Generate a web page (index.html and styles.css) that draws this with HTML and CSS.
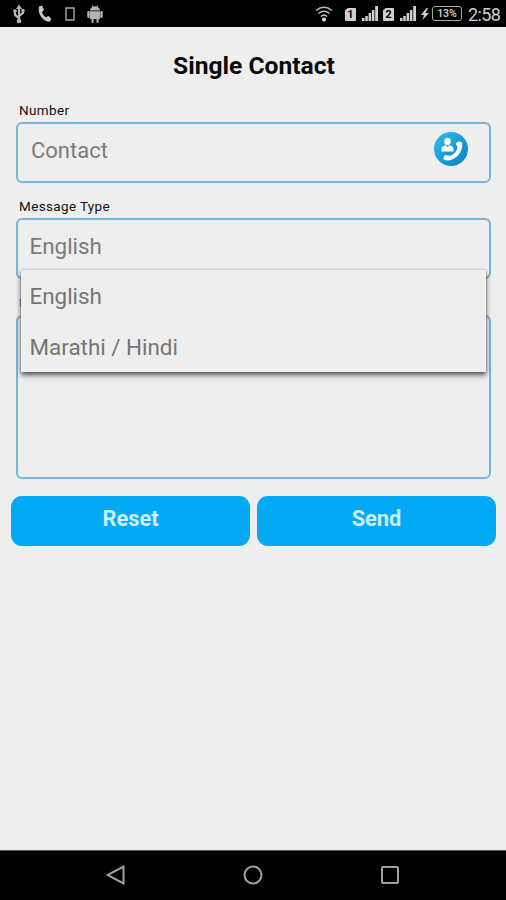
FILE: index.html
```html
<!DOCTYPE html>
<html lang="en">
<head>
<meta charset="utf-8">
<title>Single Contact</title>
<link rel="stylesheet" href="styles.css">
</head>
<body>
<div class="phone">
  <header class="status">
    <div class="status-left">
      <svg width="12" height="20" viewBox="0 0 12 20" fill="none" stroke="#b5b5b5" stroke-width="2.200"><path d="M6 2v15M6 14L2 11V7M6 12l4-3V6"/><path d="M3 5L6 .5 9 5z" fill="#b5b5b5" stroke="none"/><circle cx="6" cy="17" r="2.300" fill="#b5b5b5" stroke="none"/><circle cx="2" cy="7" r="1.800" fill="#b5b5b5" stroke="none"/><path d="M8.500 5h3v3h-3z" fill="#b5b5b5" stroke="none"/></svg>
      <svg class="call" width="14" height="18" viewBox="0 0 14 18" fill="#c6c6c6"><path d="M1 1.500L4 .5 6 5 4 7c.7 2.300 2.200 4.300 4.300 5.400l2-1.700L13.500 14l-2 2.800C5.500 17-.8 9 1 1.500z"/></svg>
      <svg class="sim" width="10" height="14" viewBox="0 0 10 14" fill="none" stroke="#a9a9a9" stroke-width="1.400"><path d="M1 1h8v12H1z"/></svg>
      <svg class="droid" width="16" height="18" viewBox="0 0 16 18" fill="#b4b4b4"><path d="M3 5.500C3 3.800 4 2.500 5.500 1.900L4.600.4l.6-.3 1 1.500a5 5 0 0 1 3.600 0l1-1.500.6.3-.9 1.500C12 2.500 13 3.800 13 5.500zM3 6.300h10V14h-1.500v3.800h-2V14h-3v3.800h-2V14H3z"/><rect x=".3" y="6" width="2.400" height="7" rx="1.100"/><rect x="13.300" y="6" width="2.400" height="7" rx="1.100"/></svg>
    </div>
    <div class="status-right">
      <svg class="wifi" width="18" height="16" viewBox="0 0 18 16" fill="none" stroke="#bdbdbd" stroke-width="1.500"><path d="M1 4.500Q9-1.800 17 4.500M3.500 7.500Q9 3 14.500 7.500M5.800 10.500Q9 7.800 12.200 10.500"/><circle cx="9" cy="13.500" r="2" fill="#ddd" stroke="none"/></svg>
      <span class="card">1</span>
      <svg class="bars" width="16" height="15" viewBox="0 0 16 15" fill="#cfcfcf"><path d="M0 12h2.500v3H0zM3.300 10h2.500v5H3.300zM6.600 7h2.500v8H6.600zM9.900 4h2.500v11H9.900zM13.200 0H16v15h-2.800z"/></svg>
      <span class="card card-two">2</span>
      <svg class="bars" width="16" height="15" viewBox="0 0 16 15" fill="#cfcfcf"><path d="M0 12h2.500v3H0zM3.300 10h2.500v5H3.300zM6.600 7h2.500v8H6.600zM9.900 4h2.500v11H9.900zM13.200 0H16v15h-2.800z"/></svg>
      <svg class="bolt" width="8" height="12" viewBox="0 0 8 12" fill="#d0d0d0"><path d="M5.500 0L0 7h3L1.500 12 8 5H4.500L7 0z"/></svg>
      <span class="battery">13%</span>
      <span class="clock">2:58</span>
    </div>
  </header>
  <main class="screen">
    <h1 class="title">Single Contact</h1>
    <div class="form">
      <div class="label">Number</div>
      <div class="field contact">
        <span>Contact</span>
        <svg width="34" height="34" viewBox="0 0 34 34"><defs><linearGradient id="disc" x1="0" y1="0" x2="1" y2="1"><stop offset=".2" stop-color="#27b2e7"/><stop offset="1" stop-color="#087fbe"/></linearGradient></defs><circle cx="17" cy="17" r="17" fill="url(#disc)"/><ellipse cx="13.500" cy="9.500" rx="3.200" ry="3.800" fill="#fff"/><path d="M7.500 19.500V17c0-2.200 2-3.300 4.200-3.800l1.800 2 1.800-2c2.300.5 4.200 1.600 4.200 3.800v2.500z" fill="#fff"/><path d="M22 12c-.3-2 4.500-3.500 5.800-1.500 1.500 3-.5 10-4.800 14-3.500 3.300-9.500 5-12.800 3.200-1.700-1.500 0-4.700 2-4.700 1.800 0 2.800 1.200 4.300.8 3.500-1.300 6.500-4.800 7-8.300.1-1.300-1.300-2-1.500-3.500z" fill="#fff"/></svg>
      </div>
      <div class="label">Message Type</div>
      <div class="select">
        <div class="field">English</div>
        <div class="menu">
          <div class="option">English</div>
          <div class="option">Marathi / Hindi</div>
        </div>
      </div>
      <div class="label covered">M</div>
      <div class="field message"></div>
    </div>
    <div class="actions">
      <button class="button">Reset</button>
      <button class="button">Send</button>
    </div>
  </main>
  <nav class="nav">
    <svg width="20" height="20" viewBox="0 0 20 20"><path d="M17.500 1.500v17L1.500 10z"/></svg>
    <svg width="20" height="20" viewBox="0 0 20 20"><circle cx="10" cy="10" r="8.500"/></svg>
    <svg width="20" height="20" viewBox="0 0 20 20"><rect x="2" y="2" width="16" height="16" rx="1"/></svg>
  </nav>
</div>
</body>
</html>
```
FILE: styles.css
```css
* { box-sizing: border-box; }
body { margin: 0; background: #eee; font-family: Roboto, "Liberation Sans", sans-serif; }
.phone { height: 900px; display: flex; flex-direction: column; overflow: hidden; }
.status { height: 27px; background: #000; display: flex; justify-content: space-between; padding: 0 6px 0 13px; flex: none; }
.status-left, .status-right { display: flex; align-items: center; }
.status-left { padding-top: 1px; }
.call { margin-left: 13px; }
.sim { margin-left: 13px; }
.droid { margin-left: 12px; }
.wifi { margin-right: 12px; }
.card { width: 11px; height: 13px; background: #d0d0d0; color: #000; font: 700 11px/13px Roboto, sans-serif; text-align: center; border-radius: 1px; clip-path: polygon(25% 0, 100% 0, 100% 100%, 0 100%, 0 20%); margin: 2px 6px 0 0; }
.card-two { margin-left: 5px; }
.bolt { margin: 1px 4px 0 5px; }
.battery { width: 30px; height: 15px; margin-left: -1px; border: 1.500px solid #aaa; border-radius: 3px; color: #d5d5d5; font-size: 10.500px; font-weight: 500; line-height: 13px; text-align: center; }
.clock { color: #cfcfcf; font-size: 18px; line-height: 27px; margin-left: 6px; padding-top: 2px; width: 32px; white-space: nowrap; letter-spacing: -.6px; }
.screen { flex: 1; min-height: 0; }
.title { margin: 0; height: 73px; padding-top: 3px; line-height: 72px; font-size: 24.600px; font-weight: 700; text-align: center; color: #0b0b0b; padding-left: 2px; }
.form { padding: 0 15px 0 16px; }
.label { height: 22px; padding-left: 3px; font-size: 13.500px; letter-spacing: .36px; line-height: 21px; color: #111; }
.covered { font-size: 10.500px; color: #777; letter-spacing: 0; }
.field { height: 61px; border: 2px solid #78b5da; border-radius: 6px; padding-left: 11.500px; font-size: 22.400px; line-height: 53px; color: #7b7b7b; }
.contact { display: flex; justify-content: space-between; padding: 0 21px 0 13px; margin-bottom: 13px; font-size: 22px; }
.contact svg { margin-top: 8px; }
.select { position: relative; margin-bottom: 14px; }
.menu { position: absolute; top: 52px; left: 5px; right: 5px; height: 102px; background: #eee; box-shadow: 0 3px 5px rgba(0, 0, 0, .65), 0 0 2px rgba(0, 0, 0, .25); }
.option { height: 51px; padding-left: 8.500px; line-height: 53px; font-size: 22.400px; color: #757575; }
.message { height: 164px; }
.actions { display: flex; gap: 7px; padding: 17px 10px 0 11px; }
.button { flex: 1; height: 50px; border: 0; border-radius: 11px; background: #03a9f4; color: #ccefff; font: 700 21.800px/45px Roboto, sans-serif; padding: 0 0 5px; }
.nav { height: 50px; flex: none; background: #000; border-top: 1px solid #555; display: flex; justify-content: center; align-items: center; gap: 117px; padding: 0 0 1px; }
.nav svg { fill: none; stroke: #a0a0a0; stroke-width: 2; }
```
